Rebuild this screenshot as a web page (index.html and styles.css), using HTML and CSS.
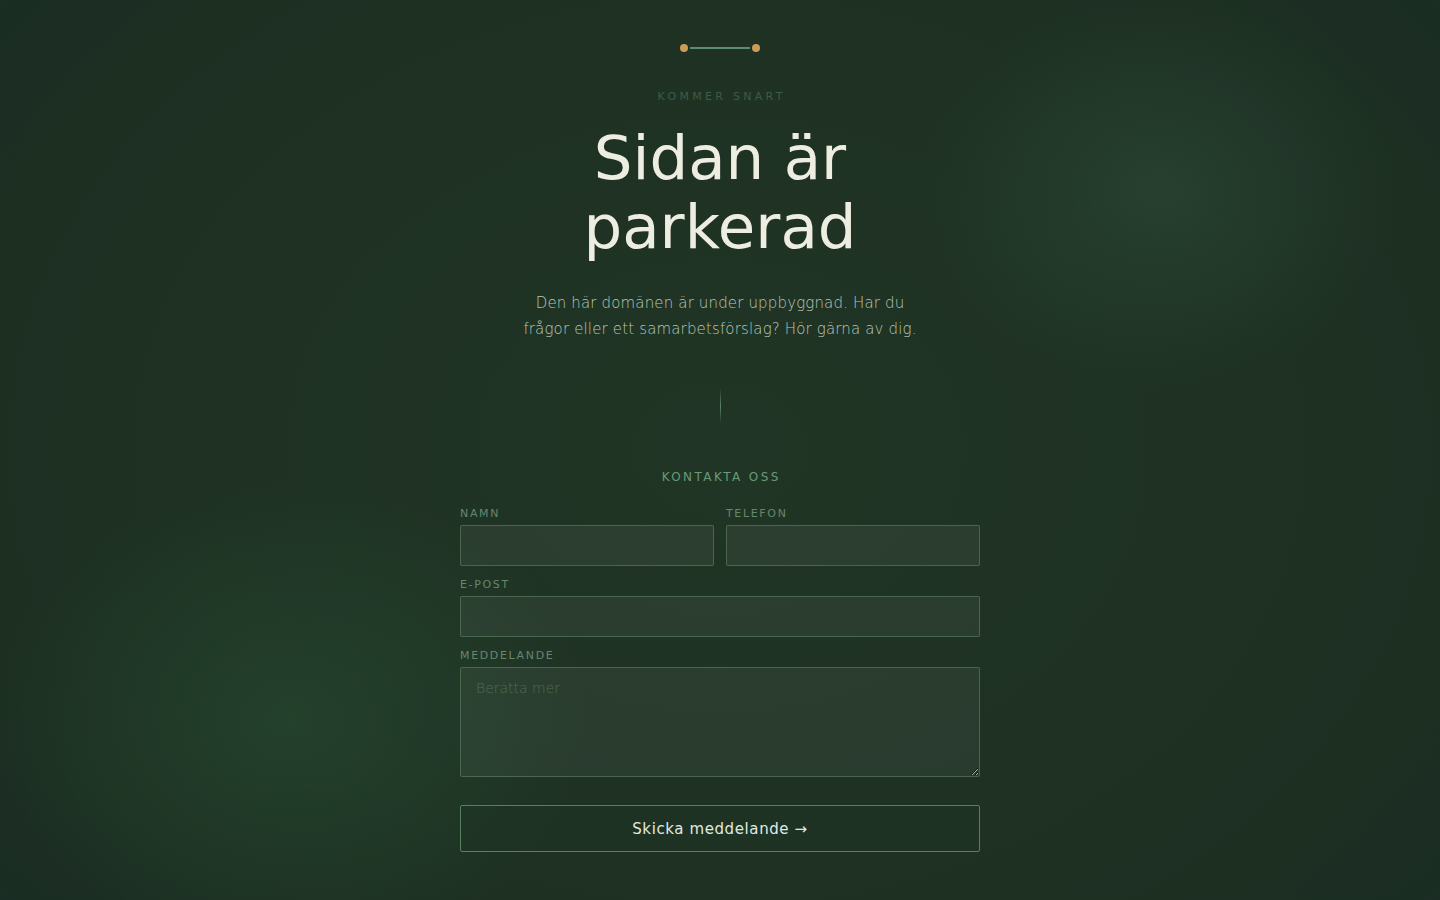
FILE: index.html
```html
<!DOCTYPE html>
<html lang="sv">
<head>
<meta charset="utf-8">
<title>Sidan är parkerad</title>
<link rel="stylesheet" href="styles.css">
</head>
<body>
<main class="page">
  <div class="ornament"><span class="dot"></span><span class="bar"></span><span class="dot"></span></div>
  <p class="eyebrow">KOMMER SNART</p>
  <h1 class="title">Sidan är<br>parkerad</h1>
  <p class="lead">Den här domänen är under uppbyggnad. Har du frågor eller ett samarbetsförslag? Hör gärna av dig.</p>
  <div class="divider"></div>
  <h2 class="section">KONTAKTA OSS</h2>
  <form class="form">
    <div class="row">
      <label class="field"><span class="label">NAMN</span><input class="input" type="text"></label>
      <label class="field"><span class="label">TELEFON</span><input class="input" type="tel"></label>
    </div>
    <label class="field"><span class="label">E-POST</span><input class="input" type="email"></label>
    <label class="field"><span class="label">MEDDELANDE</span><textarea class="input area" placeholder="Berätta mer"></textarea></label>
    <button class="submit" type="button">Skicka meddelande →</button>
  </form>
</main>
</body>
</html>
```
FILE: styles.css
```css
html, body {
  margin: 0;
  padding: 0;
}
body {
  min-height: 100vh;
  font-family: "DejaVu Sans", sans-serif;
  background-color: #1c2e21;
  background-image:
    radial-gradient(ellipse 240px 200px at 1160px 190px, rgba(44, 74, 56, 0.6), rgba(44, 74, 56, 0) 100%),
    radial-gradient(ellipse 300px 240px at 290px 720px, rgba(40, 78, 52, 0.55), rgba(40, 78, 52, 0) 100%),
    radial-gradient(ellipse 900px 700px at 720px 450px, rgba(36, 58, 40, 0.6), rgba(36, 58, 40, 0) 100%),
    radial-gradient(ellipse 1100px 800px at 720px 450px, rgba(0,0,0,0) 70%, rgba(24, 44, 40, 0.7) 100%);
  color: #eeeee4;
  overflow: hidden;
}
.page {
  width: 520px;
  margin: 0 auto;
  padding-top: 44px;
  display: flex;
  flex-direction: column;
  align-items: center;
}
.ornament {
  display: flex;
  align-items: center;
  gap: 2px;
  height: 8px;
}
.dot {
  width: 8px;
  height: 8px;
  border-radius: 50%;
  background: #c99d55;
}
.bar {
  width: 60px;
  height: 2px;
  background: #5e8e72;
}
.eyebrow {
  margin: 37px 0 0;
  font-size: 11px;
  line-height: 16px;
  letter-spacing: 0.3em;
  padding-left: 0.3em;
  color: #3d5c47;
}
.title {
  margin: 18px 0 0;
  font-size: 61px;
  line-height: 69px;
  font-weight: 400;
  text-align: center;
  color: #eeede2;
}
.lead {
  margin: 29px 0 0;
  width: 400px;
  font-size: 15px;
  line-height: 26px;
  font-weight: 200;
  letter-spacing: 0.01em;
  text-align: center;
  color: #b9c6b6;
}
.divider {
  margin-top: 46px;
  width: 1px;
  height: 36px;
  background: linear-gradient(to bottom, rgba(110, 150, 120, 0), rgba(110, 150, 120, 0.8) 50%, rgba(110, 150, 120, 0));
}
.section {
  margin: 45px 0 0;
  font-size: 12px;
  line-height: 16px;
  font-weight: 400;
  letter-spacing: 0.2em;
  padding-left: 0.2em;
  color: #6a9a76;
}
.form {
  width: 520px;
  margin-top: 22px;
  display: flex;
  flex-direction: column;
  gap: 12px;
}
.row {
  display: flex;
  gap: 12px;
}
.row .field {
  flex: 1;
}
.field {
  display: flex;
  flex-direction: column;
  gap: 4px;
}
.label {
  font-size: 11px;
  line-height: 14px;
  letter-spacing: 0.15em;
  color: #66876e;
}
.input {
  box-sizing: border-box;
  height: 41px;
  width: 100%;
  margin: 0;
  border: 1px solid rgba(110, 150, 118, 0.45);
  border-radius: 2px;
  background: rgba(255, 255, 255, 0.05);
  color: #e6ebe4;
  font-family: "DejaVu Sans", sans-serif;
  font-size: 14px;
  padding: 0 15px;
  outline: none;
}
.area {
  height: 110px;
  padding: 12px 15px;
  resize: vertical;
  display: block;
  font-weight: 200;
}
.area::placeholder {
  color: #4d6c55;
}
.submit {
  margin-top: 16px;
  height: 47px;
  box-sizing: border-box;
  width: 100%;
  border: 1px solid #587f62;
  border-radius: 2px;
  background: rgba(30, 52, 36, 0.6);
  color: #e2e9e0;
  font-family: "DejaVu Sans", sans-serif;
  font-size: 15px;
  letter-spacing: 0.04em;
  cursor: pointer;
}
```
